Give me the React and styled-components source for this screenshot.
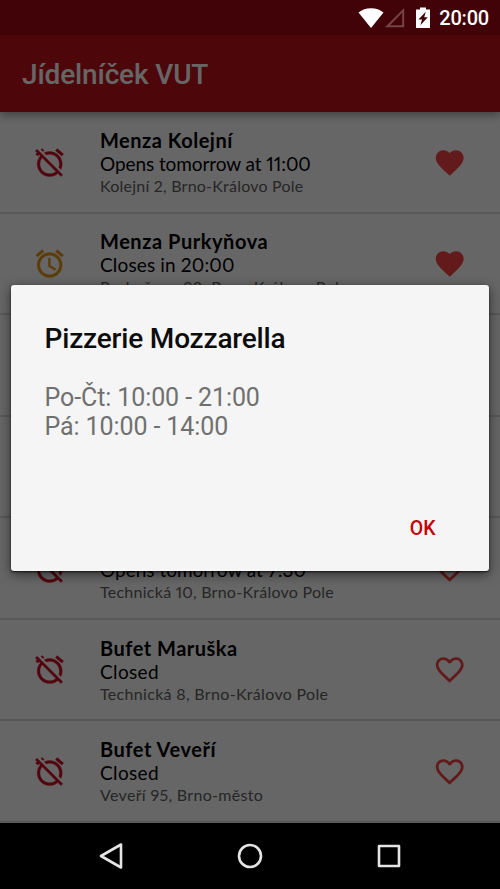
import React, {useState} from 'react';
import styled, { createGlobalStyle } from 'styled-components'


const GlobalStyle = createGlobalStyle`
  * {
    box-sizing: border-box;
  }
  body {
    margin: 0;
    background: #000;
    font-family: Roboto, "Liberation Sans", sans-serif;
  }
`
const Screen = styled.div`
    position: relative;
    display: flex;
    flex-direction: column;
    width: 500px;
    height: 889px;
    overflow: hidden;
    background: #fff;
`
const StatusBar = styled.div`
    position: relative;
    z-index: 3;
    display: flex;
    justify-content: flex-end;
    align-items: center;
    flex: none;
    height: 35px;
    padding-right: 11px;
    background: #410307;
    color: #fff;
`
const StatusIcon = styled.svg`
    display: block;
    margin-right: ${props => props.$gap}px;
`
const Clock = styled.span`
    font-size: 20px;
    font-weight: 500;
    line-height: 35px;
    letter-spacing: -0.2px;
    padding-top: 1px;
`
const Header = styled.header`
    position: relative;
    z-index: 1;
    display: flex;
    align-items: center;
    flex: none;
    height: 77px;
    padding: 2px 22px 0;
    background: #c10f18;
    box-shadow: 0 3px 9px rgba(0, 0, 0, 0.4);
`
const AppTitle = styled.h1`
    margin: 0;
    color: #fff;
    font-size: 28px;
    font-weight: 500;
    letter-spacing: -0.15px;
`
const List = styled.div`
    display: flex;
    flex-direction: column;
    flex: 1;
    background: #fff;
`
const Row = styled.div`
    display: flex;
    align-items: center;
    flex: 1;
    border-bottom: 2px solid #dedede;
`
const IconCell = styled.div`
    display: flex;
    justify-content: center;
    flex: none;
    width: 100px;
    padding-top: 1px;
`
const Icon = styled.svg`
    display: block;
    width: 33.4px;
    height: 33.4px;
    fill: ${props => props.color};
    stroke: ${props => props.color};
    stroke-width: ${props => props.$weight || 0};
    stroke-linejoin: round;
`
const Info = styled.div`
    flex: 1;
    font-family: Lato, "Open Sans", sans-serif;
    font-variant-numeric: proportional-nums;
    white-space: nowrap;
    color: #000;
`
const Name = styled.div`
    min-height: 24px;
    font-size: 20px;
    line-height: 24px;
    font-weight: 700;
    letter-spacing: ${props => props.$spacing}px;
`
const Status = styled.div`
    min-height: 24px;
    font-size: 19px;
    line-height: 24px;
    letter-spacing: ${props => props.$spacing}px;
`
const Address = styled.div`
    min-height: 20px;
    font-size: 16px;
    line-height: 20px;
    color: #606060;
    letter-spacing: ${props => props.$spacing}px;
`
const Scrim = styled.div`
    position: absolute;
    z-index: 2;
    inset: 0;
    background: rgba(0, 0, 0, 0.6);
`
const Dialog = styled.div`
    position: absolute;
    z-index: 4;
    top: 285px;
    left: 11px;
    display: flex;
    flex-direction: column;
    width: 478px;
    height: 286px;
    padding: 37px 34px 23px;
    border-radius: 3px;
    background: #f5f5f5;
    box-shadow: 0 1px 2px rgba(0, 0, 0, 0.7), 0 3px 12px rgba(0, 0, 0, 0.55);
`
const DialogTitle = styled.h2`
    margin: 0 0 0 -0.5px;
    color: #0c0c0c;
    font-size: 28px;
    line-height: 34px;
    font-weight: 500;
    letter-spacing: -0.18px;
`
const Hours = styled.div`
    margin: 27px 0 0 -0.5px;
    color: #707070;
    font-size: 25px;
    line-height: 29px;
    letter-spacing: -0.1px;
`
const DialogButton = styled.button`
    align-self: flex-end;
    margin-top: auto;
    padding: 8px 19.5px 7px;
    border: 0;
    background: none;
    color: #c40006;
    font-family: inherit;
    font-size: 19.5px;
    line-height: 24px;
    font-weight: 500;
    cursor: pointer;
`
const NavBar = styled.nav`
    position: relative;
    z-index: 3;
    display: flex;
    align-items: center;
    justify-content: space-between;
    flex: none;
    height: 66px;
    padding: 0 97px;
    background: #000;
`
const NavIcon = styled.svg`
    display: block;
    width: 28px;
    height: 28px;
    fill: none;
    stroke: #e4e4e4;
    stroke-width: 2.6;
    stroke-linejoin: round;
`

const ALARM_OFF = 'M12 6c3.87 0 7 3.13 7 7 0 .84-.16 1.65-.43 2.4l1.52 1.52c.58-1.19.91-2.51.91-3.92 0-4.97-4.03-9-9-9-1.41 0-2.73.33-3.92.91L9.6 6.43C10.35 6.16 11.16 6 12 6zm10-.28l-4.6-3.86-1.29 1.53 4.6 3.86L22 5.72zM2.92 2.29L1.65 3.57 2.98 4.9l-1.11.93 1.42 1.42 1.11-.94.8.8C3.83 8.69 3 10.75 3 13c0 4.97 4.02 9 9 9 2.25 0 4.31-.83 5.89-2.2l2.2 2.2 1.27-1.27L3.89 3.27l-.97-.98zm13.55 16.1C15.26 19.39 13.7 20 12 20c-3.87 0-7-3.13-7-7 0-1.7.61-3.26 1.61-4.47l9.86 9.86zM8.02 3.28L6.6 1.86l-.86.71 1.42 1.42.86-.71z'
const ALARM = 'M22 5.72l-4.6-3.86-1.29 1.53 4.6 3.86L22 5.72zM7.88 3.39L6.6 1.86 2 5.71l1.29 1.53 4.59-3.85zM12.5 8H11v6l4.75 2.85.75-1.23-4-2.37V8zM12 4c-4.97 0-9 4.03-9 9s4.02 9 9 9c4.97 0 9-4.03 9-9s-4.03-9-9-9zm0 16c-3.87 0-7-3.13-7-7s3.13-7 7-7 7 3.13 7 7-3.13 7-7 7z'
const HEART = 'M12 21.35l-1.45-1.32C5.4 15.36 2 12.28 2 8.5 2 5.42 4.42 3 7.5 3c1.74 0 3.41.81 4.5 2.09C13.09 3.81 14.76 3 16.5 3 19.58 3 22 5.42 22 8.5c0 3.78-3.4 6.86-8.55 11.54L12 21.35z'
const HEART_BORDER = 'M16.5 3c-1.74 0-3.41.81-4.5 2.09C10.91 3.81 9.24 3 7.5 3 4.42 3 2 5.42 2 8.5c0 3.78 3.4 6.86 8.55 11.54L12 21.35l1.45-1.32C18.6 15.36 22 12.28 22 8.5 22 5.42 19.58 3 16.5 3zm-4.4 15.55l-.1.1-.1-.1C7.14 14.24 4 11.39 4 8.5 4 6.5 5.5 5 7.5 5c1.54 0 3.04.99 3.57 2.36h1.87C13.46 5.99 14.96 5 16.5 5c2 0 3.5 1.5 3.5 3.5 0 2.89-3.14 5.74-7.9 10.05z'

// spacing: letter spacing of the name, the status and the address
const places = [
    { name: 'Menza Kolejní', status: 'Opens tomorrow at 11:00', address: 'Kolejní 2, Brno-Královo Pole', spacing: [0.5, -0.08, 0.22], favorite: true },
    { name: 'Menza Purkyňova', status: 'Closes in 20:00', address: 'Purkyňova 93, Brno-Královo Pole', spacing: [0.55, 0.15, 0.5], favorite: true, closing: true },
    {},
    {},
    { status: 'Opens tomorrow at 7:30', address: 'Technická 10, Brno-Královo Pole', spacing: [0, 0, 0.26] },
    { name: 'Bufet Maruška', status: 'Closed', address: 'Technická 8, Brno-Královo Pole', spacing: [0.5, 0.35, 0.32] },
    { name: 'Bufet Veveří', status: 'Closed', address: 'Veveří 95, Brno-město', spacing: [0.55, 0.35, 0.32] },
]

function Place({place, onSelect}) {
    const [nameSpacing, statusSpacing, addressSpacing] = place.spacing || [0, 0, 0]

    return (
        <Row onClick={onSelect}>
            <IconCell>
                <Icon viewBox="0 0 24 24" $weight={0.25} color={place.closing ? '#e59614' : '#ce0a22'}>
                    <path d={place.closing ? ALARM : ALARM_OFF} />
                </Icon>
            </IconCell>
            <Info>
                <Name $spacing={nameSpacing}>{place.name}</Name>
                <Status $spacing={statusSpacing}>{place.status}</Status>
                <Address $spacing={addressSpacing}>{place.address}</Address>
            </Info>
            <IconCell>
                <Icon viewBox="0 0 24 24" color="#f44343">
                    <path d={place.favorite ? HEART : HEART_BORDER} />
                </Icon>
            </IconCell>
        </Row>
    )
}

function App() {
    const [open, setOpen] = useState(true)

    return (
        <Screen>
            <GlobalStyle />
            <StatusBar>
                <StatusIcon $gap={1} width="26" height="20" viewBox="0 0 26 20">
                    <path d="M13 20L0.5 4.5C4 1.8 8 0.3 13 0.3S22 1.8 25.5 4.5z" fill="#fff" />
                </StatusIcon>
                <StatusIcon $gap={11} width="20" height="20" viewBox="0 0 20 20">
                    <path d="M18.2 2.4V18.2H2.4z" fill="none" stroke="#754448" strokeWidth="2" />
                </StatusIcon>
                <StatusIcon $gap={9.5} width="14" height="21" viewBox="0 0 14 21">
                    <path d="M4 0.5h6v2h4V21H0V2.500h4z" fill="#fff" />
                    <path d="M9.800 4.800L2.400 12.500h3.600l-1.600 5.700L11.800 10.200H8.200z" fill="#410307" />
                </StatusIcon>
                <Clock>20:00</Clock>
            </StatusBar>
            <Header>
                <AppTitle>Jídelníček VUT</AppTitle>
            </Header>
            <List>
                {places.map((place, index) => (
                    <Place key={index} place={place} onSelect={() => setOpen(true)} />
                ))}
            </List>
            <NavBar>
                <NavIcon viewBox="0 0 28 28">
                    <path d="M24 2.500V25.500L4 14z" />
                </NavIcon>
                <NavIcon viewBox="0 0 28 28">
                    <circle cx="14" cy="14" r="11" />
                </NavIcon>
                <NavIcon viewBox="0 0 28 28">
                    <rect x="4" y="4" width="20" height="20" />
                </NavIcon>
            </NavBar>
            {open && <Scrim />}
            {open && (
                <Dialog>
                    <DialogTitle>Pizzerie Mozzarella</DialogTitle>
                    <Hours>
                        <div>Po-Čt: 10:00 - 21:00</div>
                        <div>Pá: 10:00 - 14:00</div>
                    </Hours>
                    <DialogButton onClick={() => setOpen(false)}>OK</DialogButton>
                </Dialog>
            )}
        </Screen>
    )
}

export default App
